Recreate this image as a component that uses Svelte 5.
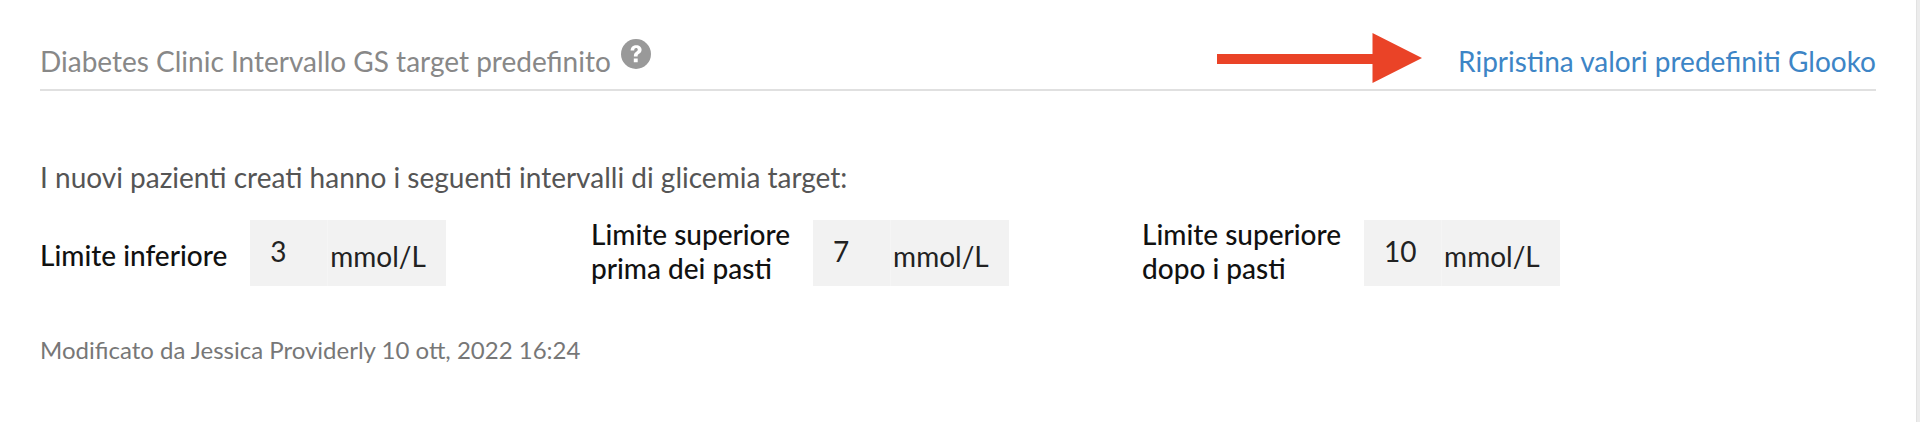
<script>
  const limits = [
    { label: ['Limite inferiore'], value: '3' },
    { label: ['Limite superiore', 'prima dei pasti'], value: '7' },
    { label: ['Limite superiore', 'dopo i pasti'], value: '10' }
  ];
</script>

<section class="settings">
  <header class="head">
    <div class="title">
      <span>Diabetes Clinic Intervallo GS target predefinito</span>
      <svg class="help" viewBox="0 0 30 30" aria-hidden="true">
        <circle cx="15" cy="15" r="15" fill="#999" />
        <path d="M9.600 11.400c.2-3.400 2.500-5.200 5.700-5.200 3.100 0 5.300 1.800 5.300 4.500 0 2-1 3.100-2.500 4.100-1.200.8-1.500 1.300-1.500 2.600h-3.700c-.1-2.200.5-3.400 2.100-4.500 1.200-.8 1.800-1.300 1.800-2.300 0-1-.7-1.600-1.700-1.600-1.100 0-1.800.8-1.900 2.400zM12.800 19.500h3.900v3.800h-3.900z" fill="#fff" />
      </svg>
    </div>
    <div class="reset">
      <svg class="arrow" viewBox="0 0 205 50" aria-hidden="true">
        <path d="M0 21h155.500V0L205 25 155.500 50V31H0z" fill="#ea4327" />
      </svg>
      <span class="link">Ripristina valori predefiniti Glooko</span>
    </div>
  </header>

  <p class="intro">I nuovi pazienti creati hanno i seguenti intervalli di glicemia target:</p>

  <div class="limits">
    {#each limits as item}
      <div class="limit">
        <div class="label" class:single={item.label.length === 1} class:double={item.label.length === 2}>
          {#each item.label as line}
            <div>{line}</div>
          {/each}
        </div>
        <div class="box">
          <span class="value">{item.value}</span>
          <span class="unit">mmol/L</span>
        </div>
      </div>
    {/each}
  </div>

  <p class="modified">Modificato da Jessica Providerly 10 ott, 2022 16:24</p>
</section>

<style>
  :global(body) {
    background: #fff;
  }

  .settings {
    padding: 0 41px 0 40px;
    height: 422px;
    box-sizing: border-box;
    border-right: 3px solid #ececec;
    box-shadow: inset -1px 0 #e2e2e2;
    font-family: Lato, "Open Sans", sans-serif;
  }

  .head {
    display: flex;
    align-items: flex-end;
    justify-content: space-between;
    height: 91px;
    padding-bottom: 11px;
    box-sizing: border-box;
    border-bottom: 2px solid #e0e0e0;
  }

  .title {
    display: flex;
    align-items: flex-start;
    gap: 10px;
    font-size: 28px;
    line-height: 34px;
    color: #888;
  }

  .help {
    width: 30px;
    height: 30px;
    margin-top: -5px;
  }

  .reset {
    display: flex;
    align-items: flex-end;
    gap: 36px;
  }

  .arrow {
    width: 205px;
    height: 50px;
    margin-bottom: -5px;
  }

  .link {
    font-size: 28px;
    line-height: 34px;
    color: #3d85c6;
  }

  .intro {
    margin: 69px 0 0;
    font-size: 28px;
    line-height: 34px;
    color: #555;
  }

  .limits {
    display: flex;
    margin-top: 26px;
  }

  .limit {
    display: flex;
    align-items: center;
    width: 551px;
    height: 66px;
  }

  .label {
    font-size: 28px;
    line-height: 34px;
    font-weight: 500;
    color: #111;
    margin-right: 23px;
    white-space: nowrap;
  }

  .label.single {
    margin-top: 4px;
  }

  .label.double {
    margin-bottom: 4px;
  }

  .box {
    display: flex;
    align-items: center;
    width: 196px;
    height: 66px;
    background: #f2f2f2;
    font-size: 28px;
    color: #222;
  }

  .value {
    align-self: stretch;
    display: flex;
    align-items: center;
    width: 78px;
    padding: 0 0 4px 20px;
    box-sizing: border-box;
    border-right: 1px solid #f5f5f5;
  }

  .unit {
    margin: 5px 0 0 2px;
  }

  .modified {
    margin: 50px 0 0;
    font-size: 24px;
    line-height: 28px;
    color: #777;
  }
</style>
